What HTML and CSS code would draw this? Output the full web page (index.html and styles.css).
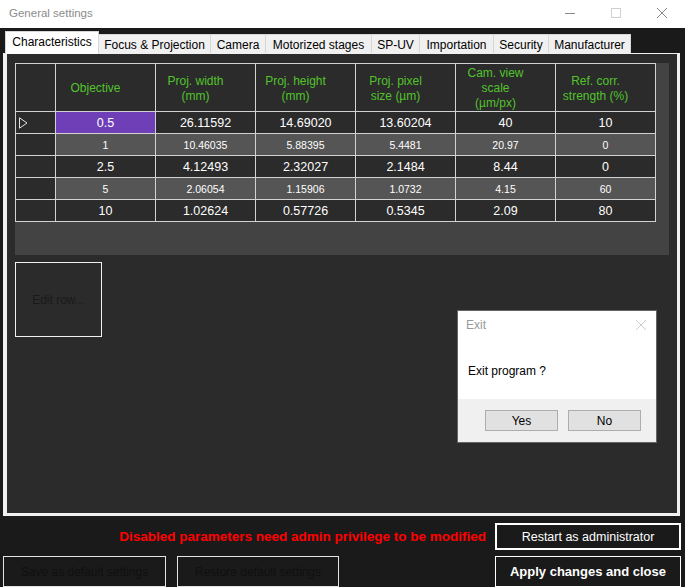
FILE: index.html
```html
<!DOCTYPE html>
<html>
<head>
<meta charset="utf-8">
<link rel="stylesheet" href="styles.css">
</head>
<body>
<div class="window">
  <div class="titlebar">
    <span class="title">General settings</span>
    <div class="controls">
      <span class="ctl"><svg width="10" height="10" viewBox="0 0 10 10"><line x1="0" y1="5.5" x2="10" y2="5.5" stroke="#8a8a8a" stroke-width="1"/></svg></span>
      <span class="ctl"><svg width="10" height="10" viewBox="0 0 10 10"><rect x="0.5" y="0.5" width="9" height="9" fill="none" stroke="#d0d0d0" stroke-width="1"/></svg></span>
      <span class="ctl"><svg width="10" height="10" viewBox="0 0 10 10"><path d="M0 0 L10 10 M10 0 L0 10" stroke="#8a8a8a" stroke-width="1"/></svg></span>
    </div>
  </div>

  <div class="tabstrip">
    <div class="tab active t1">Characteristics</div>
    <div class="tab t2">Focus &amp; Projection</div>
    <div class="tab t3">Camera</div>
    <div class="tab t4">Motorized stages</div>
    <div class="tab t5">SP-UV</div>
    <div class="tab t6">Importation</div>
    <div class="tab t7">Security</div>
    <div class="tab t8">Manufacturer</div>
  </div>

  <div class="panel">
    <div class="grid-area">
      <div class="table">
        <div class="cell rh"></div>
        <div class="cell hd">Objective</div>
        <div class="cell hd">Proj. width<br>(mm)</div>
        <div class="cell hd">Proj. height<br>(mm)</div>
        <div class="cell hd">Proj. pixel<br>size (µm)</div>
        <div class="cell hd">Cam. view<br>scale<br>(µm/px)</div>
        <div class="cell hd">Ref. corr.<br>strength (%)</div>

        <div class="cell rh"><svg width="9" height="12" viewBox="0 0 9 12"><path d="M0.5 0.8 L8 6 L0.5 11.2 Z" fill="none" stroke="#e0e0e0" stroke-width="1"/></svg></div>
        <div class="cell odd sel">0.5</div>
        <div class="cell odd">26.11592</div>
        <div class="cell odd">14.69020</div>
        <div class="cell odd">13.60204</div>
        <div class="cell odd">40</div>
        <div class="cell odd">10</div>

        <div class="cell rh"></div>
        <div class="cell even">1</div>
        <div class="cell even">10.46035</div>
        <div class="cell even">5.88395</div>
        <div class="cell even">5.4481</div>
        <div class="cell even">20.97</div>
        <div class="cell even">0</div>

        <div class="cell rh"></div>
        <div class="cell odd">2.5</div>
        <div class="cell odd">4.12493</div>
        <div class="cell odd">2.32027</div>
        <div class="cell odd">2.1484</div>
        <div class="cell odd">8.44</div>
        <div class="cell odd">0</div>

        <div class="cell rh"></div>
        <div class="cell even">5</div>
        <div class="cell even">2.06054</div>
        <div class="cell even">1.15906</div>
        <div class="cell even">1.0732</div>
        <div class="cell even">4.15</div>
        <div class="cell even">60</div>

        <div class="cell rh"></div>
        <div class="cell odd">10</div>
        <div class="cell odd">1.02624</div>
        <div class="cell odd">0.57726</div>
        <div class="cell odd">0.5345</div>
        <div class="cell odd">2.09</div>
        <div class="cell odd">80</div>
      </div>
    </div>
    <button class="edit-btn">Edit row...</button>
  </div>

  <div class="footer">
    <div class="row1">
      <span class="warn">Disabled parameters need admin privilege to be modified</span>
      <button class="restart">Restart as administrator</button>
    </div>
    <div class="row2">
      <button class="ghost save">Save as default settings</button>
      <button class="ghost restore">Restore default settings</button>
      <button class="apply">Apply changes and close</button>
    </div>
  </div>

  <div class="dialog">
    <div class="dlg-title">
      <span>Exit</span>
      <svg width="10" height="10" viewBox="0 0 10 10"><path d="M0 0 L10 10 M10 0 L0 10" stroke="#cccccc" stroke-width="1"/></svg>
    </div>
    <div class="dlg-msg">Exit program ?</div>
    <div class="dlg-foot">
      <button class="dlg-btn">Yes</button>
      <button class="dlg-btn">No</button>
    </div>
  </div>
</div>
</body>
</html>
```

FILE: styles.css
```css
* { box-sizing: border-box; }

html, body {
  margin: 0;
  padding: 0;
}

body {
  width: 685px;
  height: 587px;
  overflow: hidden;
  background: #1a1a1a;
  font-family: "Liberation Sans", Arial, sans-serif;
  font-size: 12px;
}

.window {
  position: relative;
  width: 685px;
  height: 587px;
}

button {
  font-family: inherit;
  margin: 0;
  padding: 0;
  cursor: default;
}

/* Title bar */
.titlebar {
  height: 28px;
  background: #ffffff;
  display: flex;
  align-items: center;
  padding-bottom: 3px;
  padding-left: 9px;
}

.title {
  color: #8c8c8c;
  font-size: 11.5px;
  flex: 1;
}

.controls {
  display: flex;
}

.ctl {
  width: 46px;
  display: flex;
  justify-content: center;
  align-items: center;
}

/* Tabs */
.tabstrip {
  height: 25px;
  display: flex;
  align-items: flex-end;
  padding-left: 5px;
}

.tab {
  height: 19px;
  background: #f0f0f0;
  border-top: 1px solid #d6d6d6;
  border-right: 1px solid #d6d6d6;
  color: #000;
  font-size: 12px;
  display: flex;
  align-items: center;
  justify-content: center;
  padding-top: 1px;
  white-space: nowrap;
}

.tab.active {
  height: 23px;
  margin-bottom: -1px;
  background: #ffffff;
  border-left: 1px solid #d6d6d6;
  position: relative;
  z-index: 1;
  padding-top: 0;
  padding-bottom: 2px;
}

.t1 { width: 94px; }
.t2 { width: 112px; }
.t3 { width: 55px; }
.t4 { width: 106px; }
.t5 { width: 48px; }
.t6 { width: 74px; }
.t7 { width: 55px; }
.t8 { width: 82px; }

/* Panel */
.panel {
  margin-left: 3px;
  width: 677px;
  height: 463px;
  background: #2b2b2b;
  border-top: 1px solid #f0f0f0;
  border-left: 4px solid #f0f0f0;
  border-right: 3px solid #f0f0f0;
  border-bottom: 3px solid #f0f0f0;
  padding: 9px 0 0 8px;
}

.grid-area {
  width: 654px;
  height: 192px;
  background: #434343;
}

.table {
  display: grid;
  width: max-content;
  grid-template-columns: 39px repeat(6, 99px);
  grid-template-rows: 47px repeat(5, 21px);
  gap: 1px;
  padding: 1px;
  background: #d2d2d2;
}

.cell {
  background: #2b2b2b;
  color: #ffffff;
  display: flex;
  align-items: center;
  justify-content: center;
  text-align: center;
}

.cell.rh {
  justify-content: flex-start;
  padding-left: 3px;
}

.cell.hd {
  color: #52c32b;
  font-size: 12px;
  line-height: 15px;
  padding-top: 2px;
  padding-right: 20px;
}

.cell.odd {
  font-size: 12.5px;
}

.cell.even {
  background: #555555;
  font-size: 10.5px;
}

.cell.sel {
  background: #6e3fb6;
}

.edit-btn {
  margin-top: 7px;
  width: 87px;
  height: 75px;
  border: 1px solid #f0f0f0;
  background: transparent;
  color: #1a1a1a;
  font-size: 12px;
  display: block;
}

/* Footer */
.footer {
  padding-top: 7px;
}

.row1 {
  display: flex;
  justify-content: flex-end;
  align-items: center;
  gap: 9px;
  padding-right: 4px;
}

.warn {
  color: #ff0000;
  font-weight: bold;
  font-size: 13.5px;
}

.restart {
  width: 186px;
  height: 27px;
  border: 2px solid #ffffff;
  background: #1a1a1a;
  color: #ffffff;
  font-size: 12.5px;
}

.row2 {
  display: flex;
  margin-top: 6px;
  padding: 0 4px 0 3px;
}

.ghost {
  height: 31px;
  border: 1px solid #e4e4e4;
  background: #1a1a1a;
  color: #101010;
  font-size: 12px;
}

.save { width: 163px; }
.restore { width: 162px; margin-left: 11px; }

.apply {
  margin-left: auto;
  width: 186px;
  height: 31px;
  border: 1px solid #ffffff;
  background: #1a1a1a;
  color: #ffffff;
  font-weight: bold;
  font-size: 13px;
}

/* Dialog */
.dialog {
  position: absolute;
  left: 457px;
  top: 310px;
  width: 200px;
  height: 133px;
  background: #ffffff;
  border: 1px solid #646464;
  display: flex;
  flex-direction: column;
}

.dlg-title {
  height: 30px;
  display: flex;
  align-items: center;
  justify-content: space-between;
  padding: 0 10px 2px 8px;
  color: #999999;
  font-size: 12px;
}

.dlg-msg {
  height: 58px;
  padding: 23px 0 0 10px;
  color: #000000;
  font-size: 12px;
}

.dlg-foot {
  flex: 1;
  background: #f0f0f0;
  display: flex;
  justify-content: flex-end;
  align-items: flex-start;
  gap: 10px;
  padding: 11px 15px 0 0;
}

.dlg-btn {
  width: 73px;
  height: 21px;
  background: #e1e1e1;
  border: 1px solid #adadad;
  color: #000000;
  font-size: 12px;
}
```
